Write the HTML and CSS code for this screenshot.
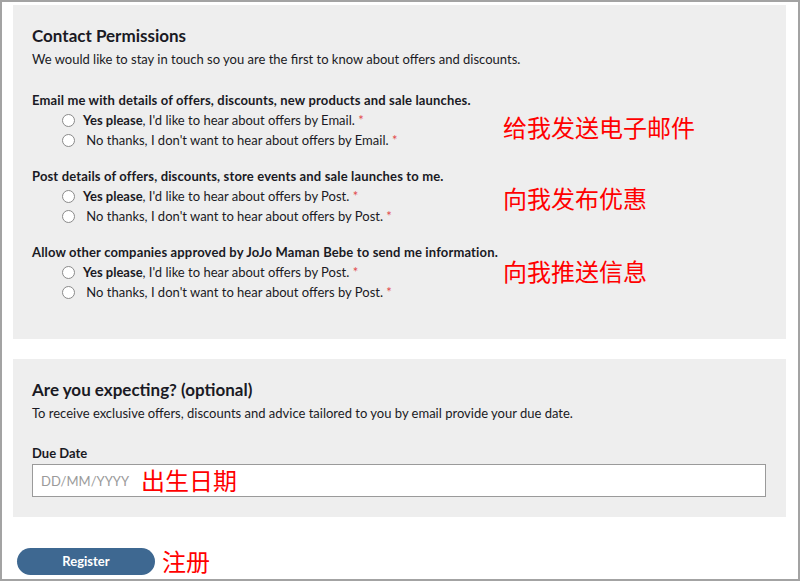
FILE: index.html
```html
<!DOCTYPE html>
<html>
   <head>
      <title>Contact Permissions</title>
      <link rel="stylesheet" href="styles.css">
   </head>
   <body>
   <div class="frame">

   <div class="panel">
      <h2>Contact Permissions</h2>
      <p class="intro">We would like to stay in touch so you are the first to know about offers and discounts.</p>

      <div class="group">
         <div class="group-title">Email me with details of offers, discounts, new products and sale launches.</div>
         <div class="group-body">
            <div class="options">
               <label class="opt"><input type="radio" name="email"><b>Yes please</b>, I'd like to hear about offers by Email. <span class="req">*</span></label>
               <label class="opt"><input type="radio" name="email">&nbsp;No thanks, I don't want to hear about offers by Email. <span class="req">*</span></label>
            </div>
            <div class="note note-email">给我发送电子邮件</div>
         </div>
      </div>

      <div class="group">
         <div class="group-title">Post details of offers, discounts, store events and sale launches to me.</div>
         <div class="group-body">
            <div class="options">
               <label class="opt"><input type="radio" name="post"><b>Yes please</b>, I'd like to hear about offers by Post. <span class="req">*</span></label>
               <label class="opt"><input type="radio" name="post">&nbsp;No thanks, I don't want to hear about offers by Post. <span class="req">*</span></label>
            </div>
            <div class="note note-post">向我发布优惠</div>
         </div>
      </div>

      <div class="group">
         <div class="group-title">Allow other companies approved by JoJo Maman Bebe to send me information.</div>
         <div class="group-body">
            <div class="options">
               <label class="opt"><input type="radio" name="third"><b>Yes please</b>, I'd like to hear about offers by Post. <span class="req">*</span></label>
               <label class="opt"><input type="radio" name="third">&nbsp;No thanks, I don't want to hear about offers by Post. <span class="req">*</span></label>
            </div>
            <div class="note note-third">向我推送信息</div>
         </div>
      </div>
   </div>

   <div class="panel panel-due">
      <h2>Are you expecting? (optional)</h2>
      <p class="intro">To receive exclusive offers, discounts and advice tailored to you by email provide your due date.</p>
      <label class="field-label" for="due">Due Date</label>
      <div class="field">
         <input id="due" type="text" placeholder="DD/MM/YYYY">
         <span class="note note-field">出生日期</span>
      </div>
   </div>

   <div class="actions">
      <button class="btn">Register</button>
      <span class="note">注册</span>
   </div>

   </div>
   </body>
</html>
```

FILE: styles.css
```css
html, body { margin:0; padding:0; background:#fff; }
body { font-family:Lato, "Noto Sans", sans-serif; color:#1a1a24; font-size:13px; }

.frame { box-sizing:border-box; width:800px; height:581px; border:2px solid #a3a3a3;
         padding:3px 12px 0 11px; overflow:hidden; }

.panel { background:#eeeeee; padding:20px 20px 37px 19px; }
.panel-due { margin-top:20px; padding-bottom:20px; }

h2 { margin:0; font-size:17px; line-height:22px; font-weight:700; }
.intro { margin:3px 0 0; line-height:18px; }

.group { margin-top:17px; }
.group:first-of-type { margin-top:23px; }
.group-title { line-height:18px; font-weight:700; letter-spacing:0.15px; }
.group-body { display:flex; }
.options { width:471px; padding-left:30px; box-sizing:border-box; padding-top:1px; }
.opt { display:flex; align-items:center; height:20px; white-space:pre; }
.opt b { font-weight:700; }
.opt input { appearance:none; -webkit-appearance:none; width:13px; height:13px; margin:0 8px 0 0;
             border:1px solid #8a8a8a; border-radius:50%; background:#fff; box-sizing:border-box; }
.req { color:#e24b4b; }

.note { font-family:"Noto Sans CJK SC", sans-serif; color:#ff0000; font-size:24px; line-height:28px; }
.note-email { margin-top:4px; }
.note-post { margin-top:-1px; }
.note-third { margin-top:-4px; }

.field-label { display:block; margin-top:22px; line-height:18px; font-weight:700; }
.field { position:relative; margin-top:2px; }
.field input { display:block; box-sizing:border-box; width:100%; height:33px; margin:0;
               border:1px solid #9a9a9a; background:#fff; padding:0 8px;
               font-family:Lato, sans-serif; font-size:13px; color:#222; }
.field input::placeholder { color:#9a9a9a; }
.note-field { position:absolute; left:109px; top:2px; }

.actions { display:flex; align-items:center; margin-top:30px; padding-left:4px; gap:7px; }
.btn { width:138px; height:27px; border:0; border-radius:14px; background:#3e6891; color:#fff;
       font-family:Lato, sans-serif; font-size:13px; font-weight:700; padding:0; }
```
